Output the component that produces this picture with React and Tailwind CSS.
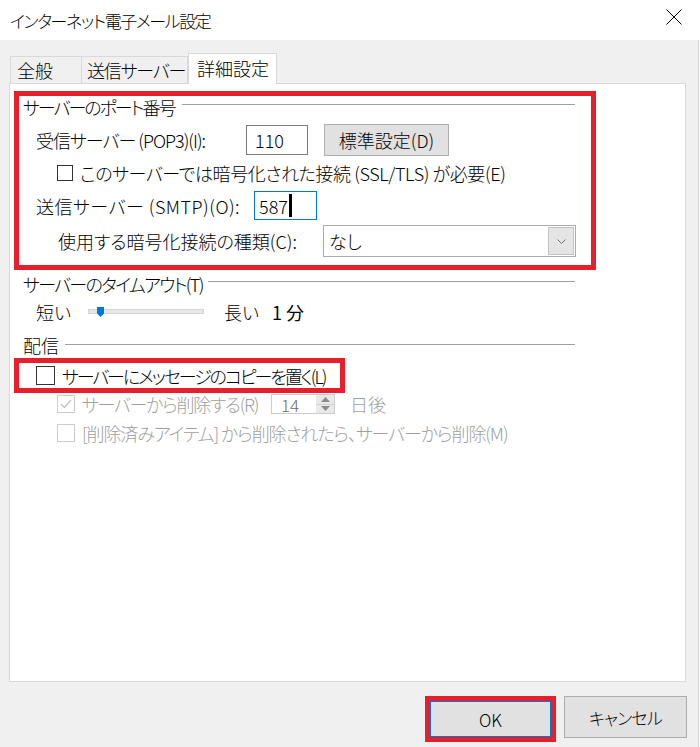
export default function App() {
  const red = "border-[#e5202a]";
  return (
    <div className="w-[700px] h-[747px] bg-[#f0f0f0] overflow-hidden relative font-['Noto_Sans_CJK_JP','Noto_Sans',sans-serif] [font-feature-settings:'palt'] font-light text-black leading-none whitespace-nowrap">
      {/* title bar */}
      <div className="h-[40px] bg-white flex items-center justify-between pl-[10px] pr-[18px]">
        <span className="text-[17px] tracking-[-1.4px]">インターネット電子メール設定</span>
        <svg width="16" height="16" viewBox="0 0 16 16" className="mt-[-6px]">
          <path d="M0.5 0.5L15.5 15.5M15.5 0.5L0.5 15.5" stroke="#000" strokeWidth="1" fill="none" />
        </svg>
      </div>
      <div className="absolute right-0 top-[40px] bottom-0 w-[2px] bg-[#fbfbfb] border-l border-[#d6d6d6]"></div>

      {/* tabs */}
      <div className="pl-[10px] pt-[13px] h-[43px] flex items-end text-[18px]">
        <div className="w-[72px] h-[27px] border border-b-0 border-[#d9d9d9] bg-[#f0f0f0] flex items-center pl-[6px]">全般</div>
        <div className="w-[106px] h-[27px] border border-b-0 border-l-0 border-[#d9d9d9] bg-[#f0f0f0] flex items-center pl-[5px] tracking-[-1.2px]">送信サーバー</div>
        <div className="w-[89px] h-[31px] border border-b-0 border-[#d9d9d9] bg-white relative z-10 -mb-px flex items-center pl-[8px] pb-[2px]">詳細設定</div>
      </div>

      {/* panel */}
      <div className="ml-[9px] w-[677px] h-[599px] bg-white border border-[#d9d9d9] text-[18px]">
        {/* red box 1 */}
        <div className={`ml-[4px] mt-[7px] w-[582px] h-[179px] border-[5px] ${red} flex flex-col`}>
          <div className="mt-[1px] h-[20px] flex items-center pl-[4px] pr-[16px]">
            <span className="tracking-[-2px]">サーバーのポート番号</span>
            <div className="flex-1 h-px bg-[#a0a0a0] ml-[7px] mt-[-5px]"></div>
          </div>
          <div className="mt-[7px] h-[32px] flex items-center pl-[17px]">
            <span className="w-[210px] tracking-[-1px]">受信サーバー (POP3)(I):</span>
            <div className="w-[62px] h-[30px] border border-[#7a7a7a] flex items-center pl-[8px]">110</div>
            <div className="ml-[16px] w-[125px] h-[32px] bg-[#e1e1e1] border border-[#adadad] flex items-center justify-center">標準設定(D)</div>
          </div>
          <div className="mt-[2px] h-[30px] flex items-center pl-[38px]">
            <div className="w-[16px] h-[16px] border border-[#333333] bg-white"></div>
            <span className="ml-[7px] tracking-[-0.4px]">このサーバーでは暗号化された接続 (SSL/TLS) が必要(E)</span>
          </div>
          <div className="mt-[2px] h-[31px] flex items-center pl-[17px]">
            <span className="w-[218px] tracking-[0.5px]">送信サーバー (SMTP)(O):</span>
            <div className="w-[63px] h-[29px] border border-[#0078d7] flex items-center pl-[4px]">
              <span>587</span>
              <div className="w-[3px] h-[23px] bg-black ml-[1px]"></div>
            </div>
          </div>
          <div className="mt-[4px] h-[32px] flex items-center pl-[39px]">
            <span className="w-[265px]">使用する暗号化接続の種類(C):</span>
            <div className="w-[253px] h-[32px] border border-[#ababab] flex items-center justify-between pl-[5px] pr-[1px]">
              <span>なし</span>
              <div className="w-[26px] h-[28px] bg-[#e5e5e5] border border-[#c4c4c4] flex items-center justify-center">
                <svg width="9" height="5" viewBox="0 0 9 5">
                  <path d="M0.5 0.5L4.5 4.5L8.5 0.5" stroke="#707070" strokeWidth="1" fill="none" />
                </svg>
              </div>
            </div>
          </div>
        </div>

        <div className="w-[566px]">
          {/* timeout header */}
          <div className="mt-[4px] h-[20px] flex items-center pl-[13px] pr-[1px]">
            <span className="tracking-[-1.7px]">サーバーのタイムアウト(T)</span>
            <div className="flex-1 h-px bg-[#a0a0a0] ml-[5px] mt-[-5px]"></div>
          </div>
          <div className="mt-[8px] h-[20px] flex items-center pl-[26px]">
            <span className="w-[52px]">短い</span>
            <div className="w-[116px] h-[12px] relative">
              <div className="absolute left-0 right-0 top-[3px] h-[5px] bg-[#e7e7e7] border border-[#d6d6d6]"></div>
              <svg width="7" height="10" viewBox="0 0 7 10" className="absolute left-[9px] top-[1px]">
                <path d="M0 0H7V6.5L3.5 10L0 6.5Z" fill="#0078d7" />
              </svg>
            </div>
            <span className="ml-[20px] w-[48px]">長い</span>
            <span className="font-normal">1 分</span>
          </div>
          {/* delivery header */}
          <div className="mt-[13px] h-[20px] flex items-center pl-[13px] pr-[1px]">
            <span>配信</span>
            <div className="flex-1 h-px bg-[#a0a0a0] ml-[6px] mt-[-2px]"></div>
          </div>
        </div>

        {/* red box 2 */}
        <div className={`ml-[4px] mt-[3px] w-[331px] h-[35px] border-[5px] ${red} flex items-center pl-[17px]`}>
          <div className="w-[19px] h-[19px] border border-[#333333] bg-white"></div>
          <span className="ml-[7px] tracking-[-2.1px]">サーバーにメッセージのコピーを置く(L)</span>
        </div>

        <div className="h-[22px] flex items-center pl-[47px] text-[#a0a0a0]">
          <div className="w-[18px] h-[18px] border border-[#cccccc] bg-white flex items-center justify-center">
            <svg width="12" height="10" viewBox="0 0 12 10">
              <path d="M1 5L4.5 8.5L11 1" stroke="#c2c2c2" strokeWidth="1.3" fill="none" />
            </svg>
          </div>
          <span className="ml-[7px] w-[189px] tracking-[-1.3px]">サーバーから削除する(R)</span>
          <div className="w-[64px] h-[20px] border border-[#cccccc] flex items-center justify-between pl-[9px]">
            <span className="text-[#6d6d6d] text-[17px]">14</span>
            <div className="w-[18px] h-[18px] flex flex-col">
              <div className="flex-1 bg-[#e9e9e9] border-b border-[#d4d4d4] flex items-center justify-center">
                <svg width="9" height="5" viewBox="0 0 9 5"><path d="M0 5L4.5 0L9 5Z" fill="#8a8a8a" /></svg>
              </div>
              <div className="flex-1 bg-[#e9e9e9] flex items-center justify-center">
                <svg width="9" height="5" viewBox="0 0 9 5"><path d="M0 0L4.5 5L9 0Z" fill="#8a8a8a" /></svg>
              </div>
            </div>
          </div>
          <span className="ml-[15px]">日後</span>
        </div>
        <div className="mt-[7px] h-[22px] flex items-center pl-[47px] text-[#a0a0a0]">
          <div className="w-[18px] h-[18px] border border-[#cccccc] bg-white"></div>
          <span className="ml-[7px] tracking-[-1.1px]">[削除済みアイテム] から削除されたら、サーバーから削除(M)</span>
        </div>
      </div>

      {/* buttons */}
      <div className="mt-[14px] flex justify-end pr-[13px] text-[17px]">
        <div className={`w-[131px] h-[46px] border-[5px] ${red}`}>
          <div className="w-full h-full bg-[#e1e1e1] border border-[#0078d7] flex items-center justify-center">OK</div>
        </div>
        <div className="ml-[8px] w-[123px] h-[42px] bg-[#e1e1e1] border border-[#adadad] flex items-center justify-center tracking-[-0.8px]">キャンセル</div>
      </div>
    </div>
  );
}
